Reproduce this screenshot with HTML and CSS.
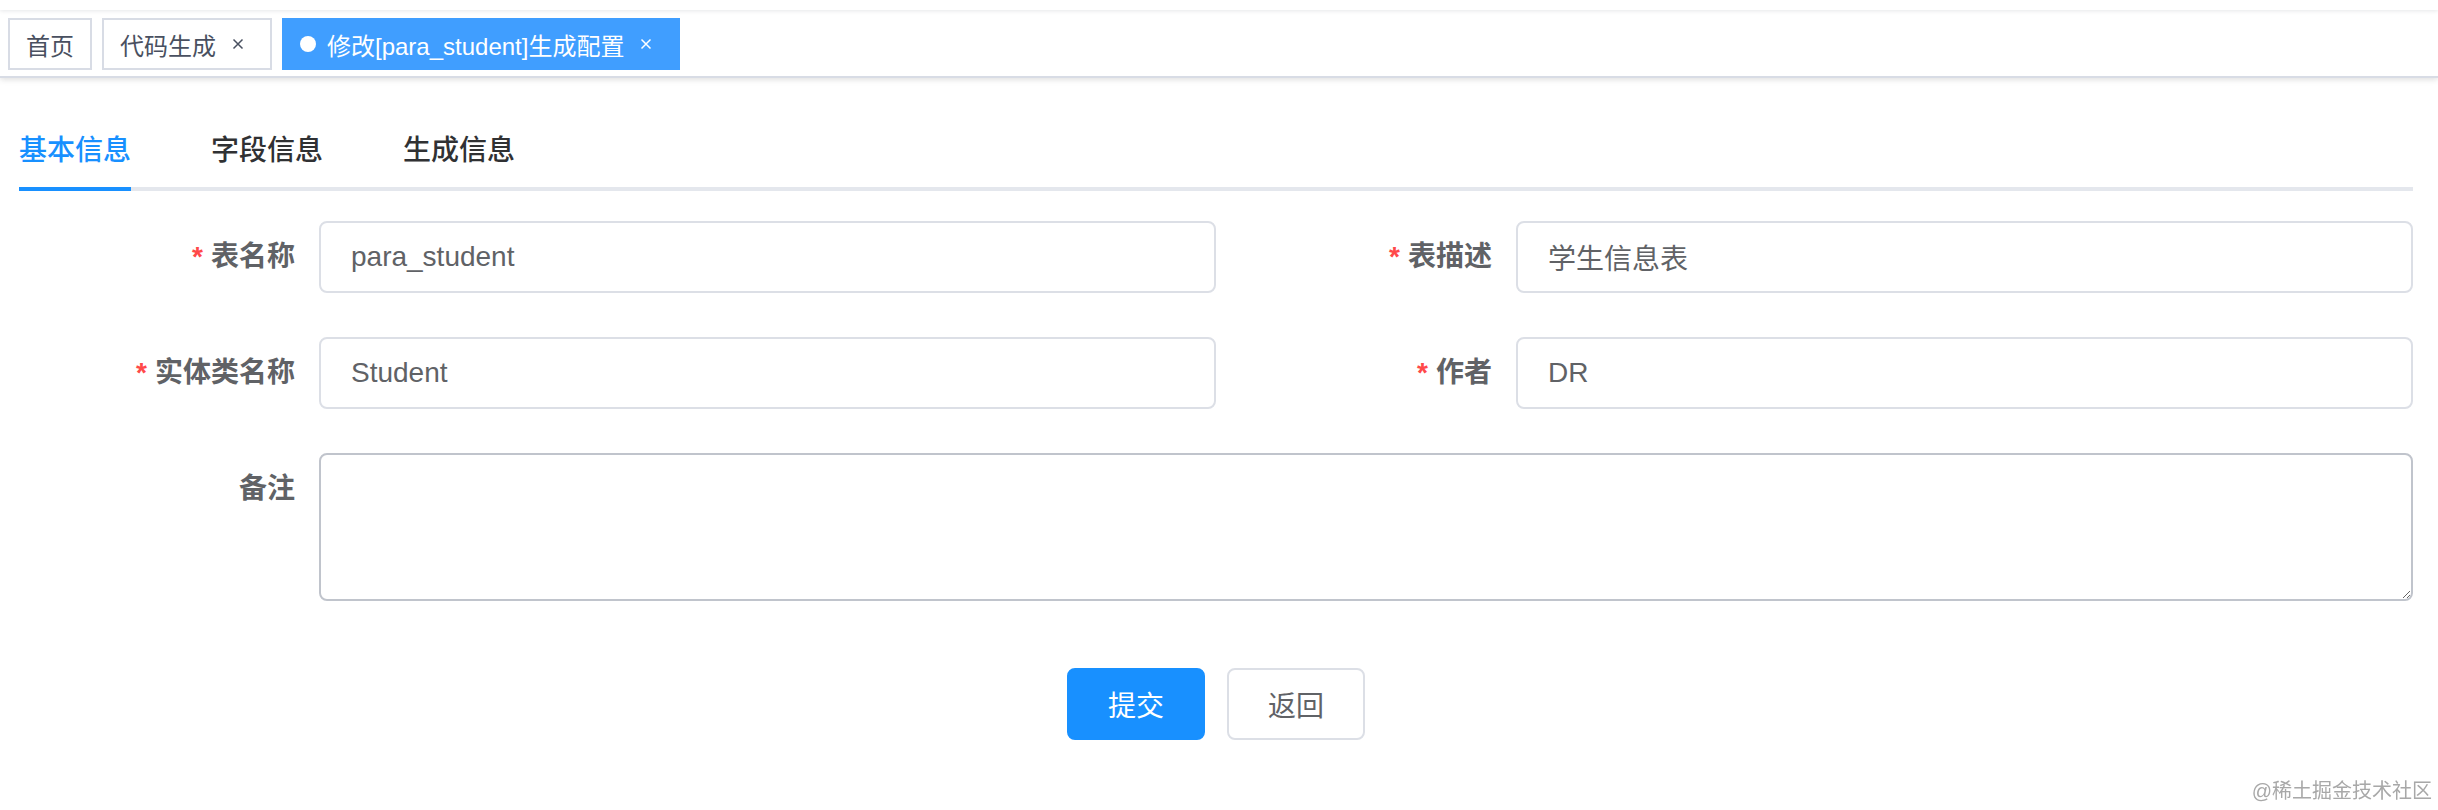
FILE: index.html
```html
<!DOCTYPE html>
<html lang="zh-CN">
  <head>
    <meta charset="UTF-8" />
    <title>修改生成配置</title>
    <link rel="stylesheet" href="styles.css">
  </head>
  <body>
    <div class="navbar"></div>
    <div class="tags-view">
      <span class="tag">首页</span>
      <span class="tag">代码生成<i class="tag-close"><svg viewBox="0 0 32 32" width="32" height="32"><path d="M11.5 11.5 L20.5 20.5 M20.5 11.5 L11.5 20.5" /></svg></i></span>
      <span class="tag active">修改[para_student]生成配置<i class="tag-close"><svg viewBox="0 0 32 32" width="32" height="32"><path d="M11.5 11.5 L20.5 20.5 M20.5 11.5 L11.5 20.5" /></svg></i></span>
    </div>

    <div class="app-main">
      <div class="tabs-nav">
        <div class="tab-item active">基本信息</div>
        <div class="tab-item">字段信息</div>
        <div class="tab-item">生成信息</div>
      </div>

      <form class="gen-form">
        <div class="form-row">
          <div class="form-item">
            <label class="form-label required">表名称</label>
            <input class="input" type="text" value="para_student" />
          </div>
          <div class="form-item">
            <label class="form-label required">表描述</label>
            <input class="input" type="text" value="学生信息表" />
          </div>
        </div>
        <div class="form-row">
          <div class="form-item">
            <label class="form-label required">实体类名称</label>
            <input class="input" type="text" value="Student" />
          </div>
          <div class="form-item">
            <label class="form-label required">作者</label>
            <input class="input" type="text" value="DR" />
          </div>
        </div>
        <div class="form-row">
          <div class="form-item">
            <label class="form-label">备注</label>
            <textarea class="textarea" rows="3"></textarea>
          </div>
        </div>
      </form>

      <div class="form-actions">
        <button type="button" class="btn btn-primary">提交</button>
        <button type="button" class="btn">返回</button>
      </div>
    </div>

    <div class="watermark">@稀土掘金技术社区</div>
  </body>
</html>
```

FILE: styles.css
```css
body {
  margin: 0;
  background: #fff;
  font-family: "Liberation Sans", "Noto Sans CJK SC", sans-serif;
}
.navbar {
  position: relative;
  z-index: 1;
  height: 10px;
  background: #fff;
  box-shadow: 0 1px 4px rgba(0, 21, 41, 0.1);
}
.tags-view {
  display: flex;
  align-items: flex-start;
  box-sizing: border-box;
  height: 68px;
  padding-top: 8px;
  background: #fff;
  border-bottom: 2px solid #d8dce5;
  box-shadow: 0 2px 6px 0 rgba(0, 0, 0, 0.1), 0 0 6px 0 rgba(0, 0, 0, 0.04);
}
.tag {
  display: inline-flex;
  align-items: center;
  box-sizing: border-box;
  height: 52px;
  margin-left: 10px;
  padding: 0 16px;
  border: 2px solid #d8dce5;
  background: #fff;
  color: #495060;
  font-size: 24px;
  white-space: nowrap;
}
.tag:first-child {
  margin-left: 8px;
}
.tag.active {
  background: #409eff;
  border-color: #409eff;
  color: #fff;
}
.tag.active::before {
  content: "";
  width: 16px;
  height: 16px;
  margin-right: 11px;
  border-radius: 50%;
  background: #fff;
}
.tag-close {
  display: inline-flex;
  width: 32px;
  height: 32px;
  margin-left: 6px;
}
.tag-close path {
  fill: none;
  stroke: currentColor;
  stroke-width: 1.5;
}

.app-main {
  padding: 33px 25px 0 19px;
}
.tabs-nav {
  display: flex;
  border-bottom: 4px solid #e4e7ed;
  margin-bottom: 30px;
}
.tab-item {
  height: 80px;
  line-height: 80px;
  margin: 0 40px -4px;
  font-size: 28px;
  font-weight: 500;
  color: #303133;
}
.tab-item:first-child {
  margin-left: 0;
}
.tab-item.active {
  color: #1890ff;
  box-shadow: inset 0 -4px 0 #1890ff;
}

.form-row {
  display: flex;
}
.form-item {
  flex: 1;
  display: flex;
  align-items: flex-start;
  margin-bottom: 44px;
}
.form-label {
  flex: none;
  box-sizing: border-box;
  width: 300px;
  padding-right: 24px;
  line-height: 72px;
  text-align: right;
  font-size: 28px;
  font-weight: 700;
  color: #606266;
}
.form-label.required::before {
  content: "*";
  margin-right: 8px;
  color: #ff4949;
}
.input,
.textarea {
  flex: 1;
  min-width: 0;
  box-sizing: border-box;
  border: 2px solid #dcdfe6;
  border-radius: 8px;
  background: #fff;
  color: #606266;
  font-family: inherit;
  font-size: 28px;
  outline: none;
}
.input {
  height: 72px;
  padding: 0 30px;
}
.textarea {
  height: 148px;
  padding: 10px 30px;
  line-height: 1.5;
  border-color: #c0c4cc;
  resize: vertical;
}

.form-actions {
  display: flex;
  justify-content: center;
  gap: 22px;
  margin-top: 23px;
}
.btn {
  box-sizing: border-box;
  width: 138px;
  height: 72px;
  border: 2px solid #dcdfe6;
  border-radius: 8px;
  background: #fff;
  color: #606266;
  font-family: inherit;
  font-size: 28px;
}
.btn-primary {
  background: #1890ff;
  border-color: #1890ff;
  color: #fff;
}

.watermark {
  position: fixed;
  right: 6px;
  bottom: 6px;
  font-size: 20px;
  color: #a8a8a8;
}
```
